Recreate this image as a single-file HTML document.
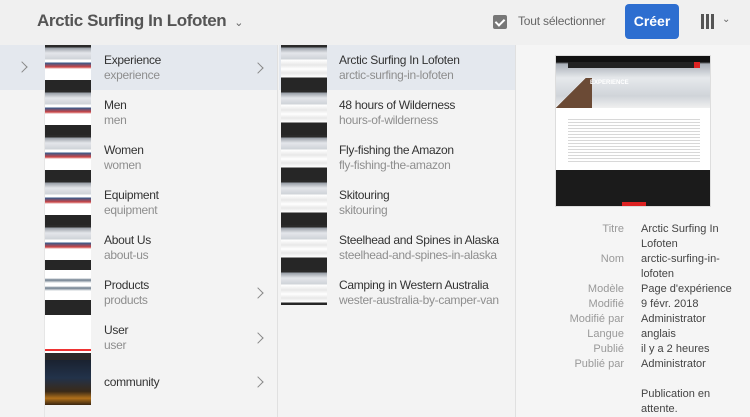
<!DOCTYPE html>
<html><head><meta charset="utf-8"><style>
*{margin:0;padding:0;box-sizing:border-box}
body{width:750px;height:417px;overflow:hidden;background:#f3f3f3;font-family:"Liberation Sans",sans-serif;position:relative}
.hdr{position:absolute;left:0;top:0;width:750px;height:45px;background:#f0f0f0}
.title{position:absolute;left:37px;top:11px;font-size:17px;color:#555;font-weight:bold;letter-spacing:-0.4px}
.title .car{font-weight:normal;font-size:11px;margin-left:8px;color:#666}
.sel{position:absolute;top:14px;font-size:12px;color:#666;letter-spacing:-0.2px}
.cb{position:absolute;left:493px;top:15px;width:14px;height:14px;background:#777;border-radius:2px}
.cb:after{content:"";position:absolute;left:4px;top:2px;width:4px;height:7px;border:solid #fff;border-width:0 2px 2px 0;transform:rotate(45deg)}
.btn{position:absolute;left:625px;top:4px;width:54px;height:35px;background:#2d6ed0;border-radius:4px;color:#fff;font-weight:bold;font-size:14px;text-align:center;line-height:35px}
.cols{position:absolute;left:701px;top:14px}
.cols i{display:inline-block;width:3px;height:15px;background:#555;margin-right:2px}
.col1{position:absolute;left:0;top:45px;width:278px;height:372px;background:#f3f3f3;border-right:1px solid #e0e0e0}
.col2{position:absolute;left:279px;top:45px;width:237px;height:372px;background:#f3f3f3;border-right:1px solid #e0e0e0}
.col3{position:absolute;left:516px;top:45px;width:234px;height:372px;background:#f5f5f5}
.row{position:absolute;left:0;height:45px;width:100%}
.row.on{background:#e4e8ee}
.th{position:absolute;top:0;width:46px;height:45px;background:linear-gradient(#2a2a2a 0,#2a2a2a 2px,#9aa0a8 3px,#e4e6ea 8px,#cfd3d8 14px,#fff 15px,#fff 17px,#3a5a8a 18px,#c44 22px,#fff 24px,#fff 35px,#262626 35px,#262626 45px)}
.th.p2{background:linear-gradient(#2a2a2a 0,#2a2a2a 2px,#9aa0a8 3px,#e4e6ea 8px,#cfd3d8 14px,#fff 15px,#e8e8e8 20px,#fff 24px,#e8e8e8 28px,#fff 32px,#262626 33px,#262626 45px)}
.t1{font-size:12px;color:#333;position:absolute;top:8px;letter-spacing:-0.3px;white-space:nowrap}
.t2{font-size:12px;color:#8e8e8e;position:absolute;top:23px;letter-spacing:-0.3px;white-space:nowrap}
.chev{position:absolute;top:15px;width:8px;height:8px;border:solid #888;border-width:1.5px 1.5px 0 0;transform:rotate(45deg)}
.prev{position:absolute;left:555px;top:55px;width:156px;height:152px;background:linear-gradient(#111 0,#111 6px,#aab0b8 8px,#e6e9ec 22px,#d0d4d9 40px,#f0f0f0 52px,#fff 52px,#fff 114px,#1b1b1b 114px,#1b1b1b 152px);border:1px solid #ddd}
.prev .lines{position:absolute;left:12px;top:62px;width:132px;height:46px;background:repeating-linear-gradient(#fff 0,#fff 1px,#d8d8d8 1px,#d8d8d8 2px,#fff 2px,#fff 3px)}
.prev .hill{position:absolute;left:0;top:22px;width:36px;height:30px;background:linear-gradient(135deg,transparent 45%,#6b4a35 45%)}
.prev .red{position:absolute;left:66px;top:146px;width:24px;height:4px;background:#d22}
.prev .txt{position:absolute;left:34px;top:24px;color:#fff;font-size:6px;font-weight:bold}
.prev .nav{position:absolute;left:12px;top:6px;width:132px;height:6px;background:#222}
.prev .nav:after{content:"";position:absolute;right:0;top:0;width:6px;height:6px;background:#d22}
.meta{position:absolute;font-size:11px;line-height:15px}
.meta .k{position:absolute;right:0;color:#999;text-align:right;white-space:nowrap}
.meta .v{position:absolute;left:0;color:#444;width:80px}
</style></head><body>
<div class="hdr">
<div class="title">Arctic Surfing In Lofoten<span class="car">&#8964;</span></div>
<div class="cb"></div><div class="sel" style="left:518px">Tout sélectionner</div>
<div class="btn">Créer</div>
<div class="cols"><i></i><i></i><i></i><span style="font-size:10px;color:#666;margin-left:6px;vertical-align:top">&#8964;</span></div>
</div>
<div class="col1">
<div style="position:absolute;left:44px;top:0;width:1px;height:372px;background:#e6e6e6"></div>
<div class="row on" style="top:0"><div class="chev" style="left:18px;top:18px"></div></div>
<div class="th" style="left:45px;top:0"></div><div class="t1" style="left:104px;top:8px">Experience</div><div class="t2" style="left:104px;top:23px">experience</div><div class="chev" style="left:254px;top:19px"></div>
<div class="th" style="left:45px;top:45px"></div><div class="t1" style="left:104px;top:53px">Men</div><div class="t2" style="left:104px;top:68px">men</div>
<div class="th" style="left:45px;top:90px"></div><div class="t1" style="left:104px;top:98px">Women</div><div class="t2" style="left:104px;top:113px">women</div>
<div class="th" style="left:45px;top:135px"></div><div class="t1" style="left:104px;top:143px">Equipment</div><div class="t2" style="left:104px;top:158px">equipment</div>
<div class="th" style="left:45px;top:180px"></div><div class="t1" style="left:104px;top:188px">About Us</div><div class="t2" style="left:104px;top:203px">about-us</div>
<div class="th" style="left:45px;top:225px;background:linear-gradient(#fff 0,#fff 8px,#6a7a8a 10px,#fff 13px,#fff 16px,#6a7a8a 18px,#fff 21px,#fff 30px,#262626 30px,#262626 45px)"></div><div class="t1" style="left:104px;top:233px">Products</div><div class="t2" style="left:104px;top:248px">products</div><div class="chev" style="left:254px;top:244px"></div>
<div class="th" style="left:45px;top:270px;background:linear-gradient(#fff 0,#fff 34px,#e33 34px,#e33 36px,#fff 36px,#fff 38px,#2a2a2a 38px)"></div><div class="t1" style="left:104px;top:278px">User</div><div class="t2" style="left:104px;top:293px">user</div><div class="chev" style="left:254px;top:289px"></div>
<div class="th" style="left:45px;top:315px;height:45px;background:linear-gradient(#1a2230,#22324a 40%,#3a2a18 70%,#b0701a 85%,#3a2510)"></div><div class="t1" style="left:104px;top:330px">community</div><div class="chev" style="left:254px;top:333px"></div>
</div>
<div class="col2">
<div class="row on" style="top:0"></div>
<div class="th p2" style="left:2px;top:0"></div><div class="t1" style="left:60px">Arctic Surfing In Lofoten</div><div class="t2" style="left:60px">arctic-surfing-in-lofoten</div>
<div class="th p2" style="left:2px;top:45px"></div><div class="t1" style="left:60px;top:53px">48 hours of Wilderness</div><div class="t2" style="left:60px;top:68px">hours-of-wilderness</div>
<div class="th p2" style="left:2px;top:90px"></div><div class="t1" style="left:60px;top:98px">Fly-fishing the Amazon</div><div class="t2" style="left:60px;top:113px">fly-fishing-the-amazon</div>
<div class="th p2" style="left:2px;top:135px"></div><div class="t1" style="left:60px;top:143px">Skitouring</div><div class="t2" style="left:60px;top:158px">skitouring</div>
<div class="th p2" style="left:2px;top:180px"></div><div class="t1" style="left:60px;top:188px">Steelhead and Spines in Alaska</div><div class="t2" style="left:60px;top:203px">steelhead-and-spines-in-alaska</div>
<div class="th p2" style="left:2px;top:225px;height:35px"></div><div class="t1" style="left:60px;top:233px">Camping in Western Australia</div><div class="t2" style="left:60px;top:248px">wester-australia-by-camper-van</div>
</div>
<div class="col3"></div>
<div class="prev"><div class="nav"></div><div class="hill"></div><div class="txt">EXPERIENCE</div><div class="lines"></div><div class="red"></div></div>
<div class="meta" style="left:641px;top:222px">
<div class="k" style="right:17px;top:0">Titre</div><div class="v" style="top:0">Arctic Surfing In Lofoten</div>
<div class="k" style="right:17px;top:30px">Nom</div><div class="v" style="top:30px">arctic-surfing-in-lofoten</div>
<div class="k" style="right:17px;top:60px">Modèle</div><div class="v" style="top:60px;width:110px">Page d'expérience</div>
<div class="k" style="right:17px;top:75px">Modifié</div><div class="v" style="top:75px">9 févr. 2018</div>
<div class="k" style="right:17px;top:90px">Modifié par</div><div class="v" style="top:90px">Administrator</div>
<div class="k" style="right:17px;top:105px">Langue</div><div class="v" style="top:105px">anglais</div>
<div class="k" style="right:17px;top:120px">Publié</div><div class="v" style="top:120px">il y a 2 heures</div>
<div class="k" style="right:17px;top:135px">Publié par</div><div class="v" style="top:135px">Administrator</div>
<div class="v" style="top:165px;width:75px">Publication en attente.</div>
</div>
</body></html>
